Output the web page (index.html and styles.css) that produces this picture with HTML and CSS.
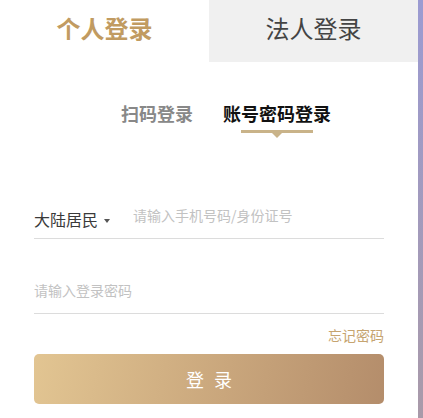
FILE: index.html
```html
<!DOCTYPE html>
<html lang="zh-CN">
<head>
<meta charset="utf-8">
<title>登录</title>
<link rel="stylesheet" href="styles.css">
</head>
<body>
<div class="card">
  <div class="tabs">
    <div class="tab tab-active">个人登录</div>
    <div class="tab tab-idle">法人登录</div>
  </div>
  <div class="subtabs">
    <div class="subtab">扫码登录</div>
    <div class="subtab subtab-active">
      <span>账号密码登录</span>
      <span class="bar"></span>
    </div>
  </div>
  <div class="row row-first">
    <div class="select">大陆居民<span class="caret"></span></div>
    <input class="field" type="text" placeholder="请输入手机号码/身份证号">
  </div>
  <div class="row row-second">
    <input class="field" type="password" placeholder="请输入登录密码">
  </div>
  <div class="forget">忘记密码</div>
  <button class="submit">登 录</button>
</div>
</body>
</html>
```

FILE: styles.css
```css
html, body {
  margin: 0;
  padding: 0;
}
body {
  width: 423px;
  height: 418px;
  background: linear-gradient(to bottom, #9b9bd2, #a99aa9);
  font-family: "Noto Sans CJK SC", "Microsoft YaHei", sans-serif;
  overflow: hidden;
}
.card {
  width: 418px;
  height: 418px;
  background: #fff;
  display: flex;
  flex-direction: column;
}
.tabs {
  display: flex;
  height: 62px;
  flex: none;
}
.tab {
  flex: 1;
  display: flex;
  align-items: center;
  justify-content: center;
  font-size: 24px;
  padding-bottom: 7px;
  box-sizing: border-box;
}
.tab-active {
  color: #c19b61;
  font-weight: 700;
  background: #fff;
}
.tab-idle {
  color: #444;
  background: #f0f0f0;
}
.subtabs {
  display: flex;
  gap: 30px;
  padding-left: 121px;
  margin-top: 39px;
  align-items: flex-start;
  flex: none;
}
.subtab {
  font-size: 18px;
  line-height: 24px;
  height: 24px;
  font-weight: 700;
  color: #888;
}
.subtab-active {
  color: #111;
  display: flex;
  flex-direction: column;
  align-items: center;
  position: relative;
}
.bar {
  position: absolute;
  left: 18px;
  top: 29px;
  display: block;
  width: 72px;
  height: 3px;
  background: #c9b389;
}
.bar::after {
  content: "";
  position: absolute;
  left: 31px;
  top: 3px;
  border-left: 5px solid transparent;
  border-right: 5px solid transparent;
  border-top: 5px solid #c9b389;
}
.row {
  margin: 0 34px;
  display: flex;
  align-items: center;
  height: 30px;
  padding-bottom: 8px;
  border-bottom: 1px solid #dcdcdc;
  flex: none;
}
.row-first {
  margin-top: 75px;
}
.row-second {
  margin-top: 36px;
}
.select {
  display: flex;
  align-items: center;
  font-size: 16px;
  line-height: 22px;
  height: 22px;
  color: #3a3a3a;
  margin-top: 8px;
  margin-right: 23px;
  white-space: nowrap;
}
.caret {
  display: inline-block;
  margin-left: 6px;
  margin-top: 4px;
  border-left: 3px solid transparent;
  border-right: 3px solid transparent;
  border-top: 4px solid #555;
}
.field {
  flex: 1;
  min-width: 0;
  height: 30px;
  padding: 0;
  border: none;
  outline: none;
  background: transparent;
  font-family: inherit;
  font-size: 14px;
  line-height: 30px;
  color: #333;
}
.field::placeholder {
  color: #c2c2c2;
}
.forget {
  margin: 11px 34px 0;
  text-align: right;
  font-size: 14px;
  line-height: 20px;
  height: 20px;
  color: #c6a470;
  flex: none;
}
.submit {
  margin: 9px 34px 0;
  height: 50px;
  flex: none;
  border: none;
  border-radius: 5px;
  background: linear-gradient(100deg, #e2c592 0%, #c9a67c 55%, #b48d6b 100%);
  color: #fff;
  font-family: inherit;
  font-size: 18px;
  letter-spacing: 3px;
  padding: 0 0 0 3px;
}
```
